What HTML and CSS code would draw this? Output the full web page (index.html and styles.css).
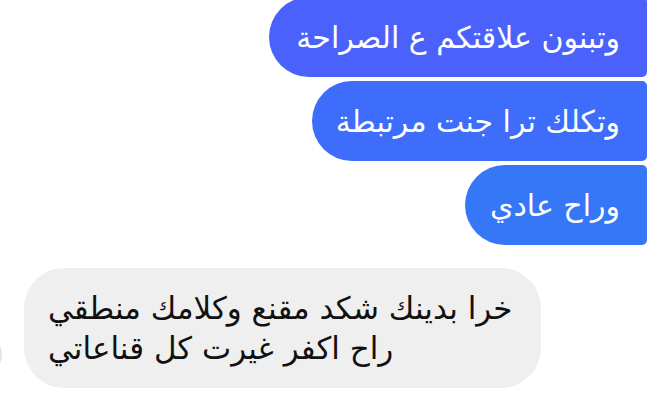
FILE: index.html
```html
<!DOCTYPE html>
<html lang="ar">
<head>
    <meta charset="UTF-8">
    <meta name="viewport" content="width=device-width, initial-scale=1.0">
    <title>Chat</title>
    <link rel="stylesheet" href="styles.css">
</head>
<body>
    <div class="chat">
        <div class="sent">
            <div class="bubble first" dir="rtl">وتبنون علاقتكم ع الصراحة</div>
            <div class="bubble second" dir="rtl">وتكلك ترا جنت مرتبطة</div>
            <div class="bubble third" dir="rtl">وراح عادي</div>
        </div>
        <div class="received">
            <span class="avatar"></span>
            <div class="bubble-in" dir="rtl">خرا بدينك شكد مقنع وكلامك منطقي<br>راح اكفر غيرت كل قناعاتي</div>
        </div>
    </div>
</body>
</html>
```

FILE: styles.css
```css
body {
    margin: 0;
    padding: 0;
    background-color: #ffffff;
    font-family: "DejaVu Sans", "Noto Sans", sans-serif;
    overflow: hidden;
}

.chat {
    width: 663px;
    height: 412px;
    overflow: hidden;
}

.sent {
    display: flex;
    flex-direction: column;
    align-items: flex-end;
    gap: 4px;
    padding-right: 16px;
    margin-top: -3px;
}

.bubble {
    height: 80px;
    display: flex;
    align-items: center;
    padding: 0 27px;
    border-radius: 40px 5px 5px 40px;
    color: #ffffff;
    font-size: 30px;
}

.first {
    background: #4a62fb;
}
.second {
    background: #3e6cfb;
    padding-left: 24px;
}
.third {
    background: #3577f7;
    padding-left: 25px;
}

.received {
    display: flex;
    align-items: center;
    margin-top: 23px;
}

.avatar {
    width: 40px;
    height: 40px;
    border-radius: 50%;
    background: #e4e4e4;
    margin-left: -38px;
    margin-right: 22px;
    margin-top: 54px;
}

.bubble-in {
    width: 517px;
    height: 120px;
    box-sizing: border-box;
    display: flex;
    flex-direction: column;
    justify-content: center;
    padding: 0 24px;
    border-radius: 40px;
    background: #efefef;
    color: #111111;
    font-size: 31px;
    line-height: 40px;
    text-align: left;
}
```
